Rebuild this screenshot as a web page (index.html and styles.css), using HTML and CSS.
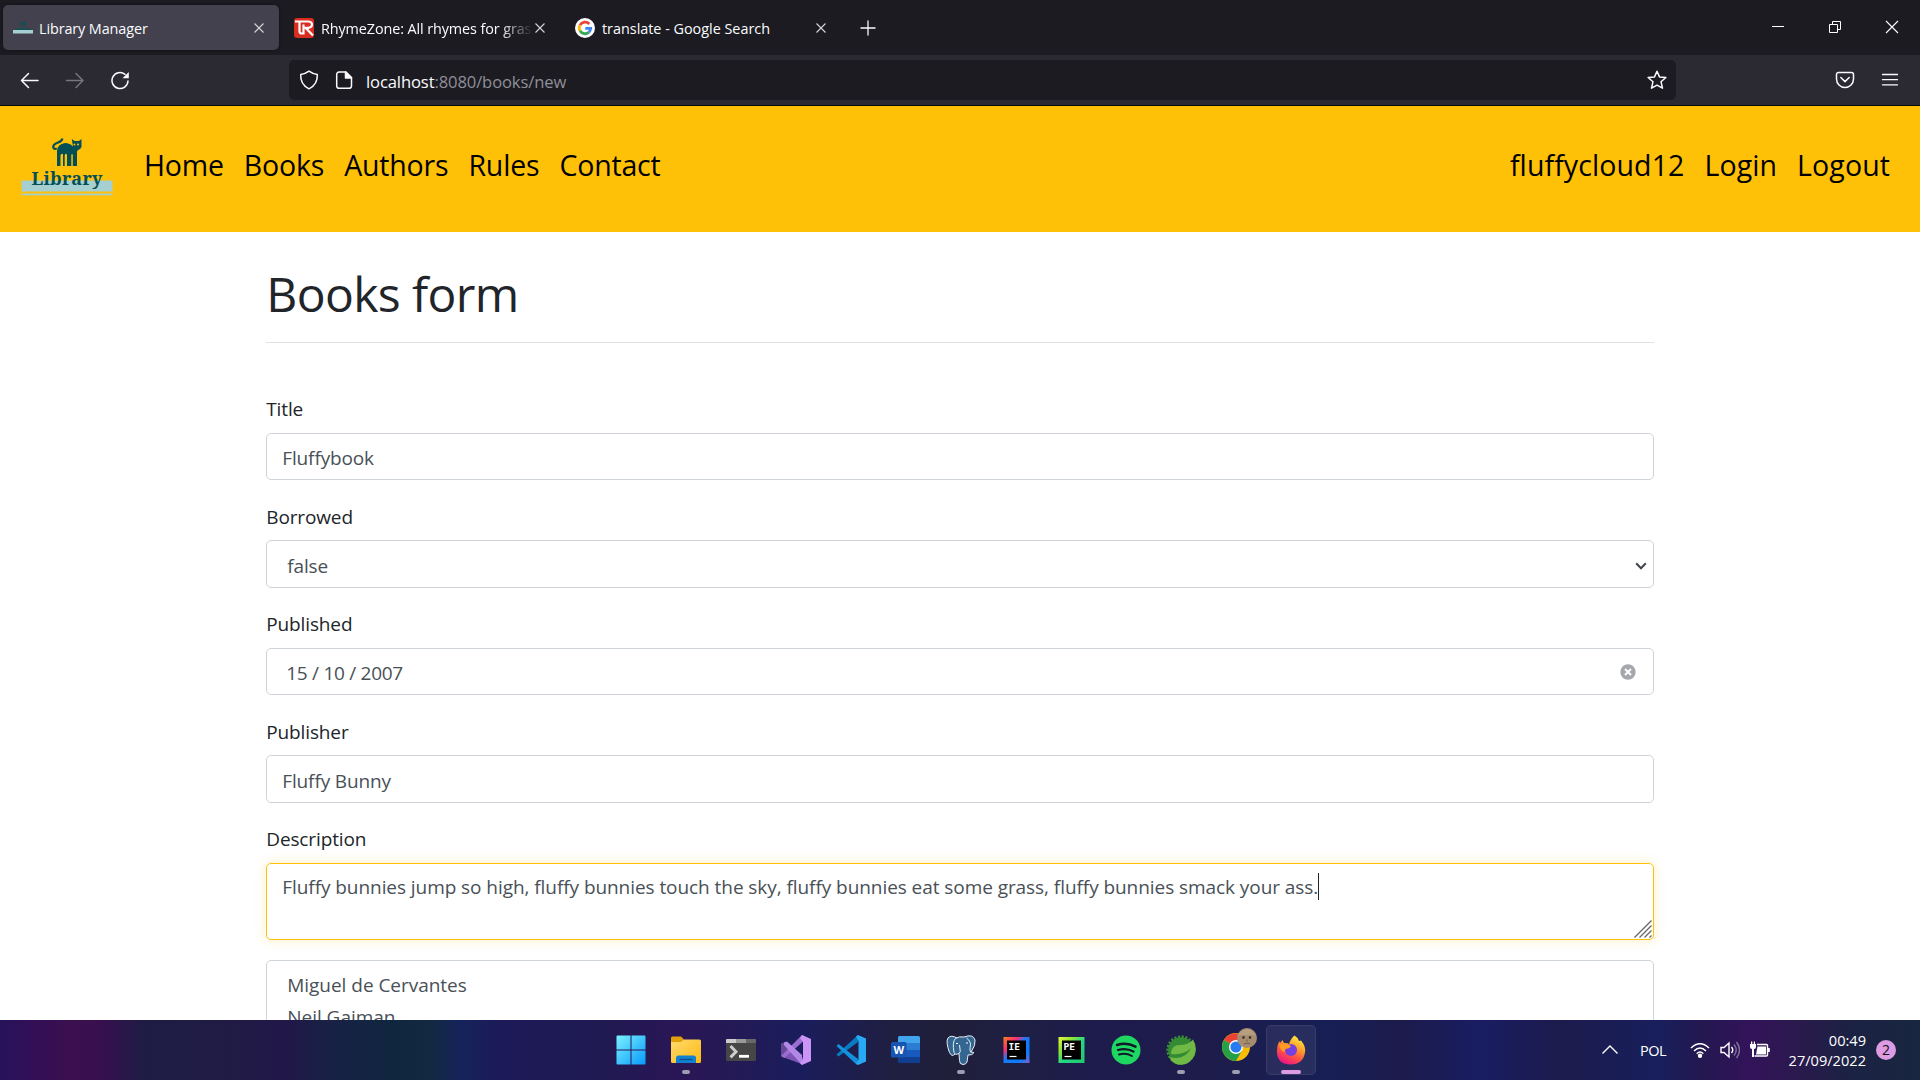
FILE: index.html
```html
<!DOCTYPE html>
<html lang="en">
<head>
<meta charset="utf-8">
<title>Library Manager</title>
<link rel="stylesheet" href="styles.css">
</head>
<body>
<div class="screen">
  <header class="tabbar">
    <div class="tabs">
      <div class="tab active">
        <svg class="favicon" viewBox="0 0 20 20"><rect y="12" width="20" height="3.500" fill="#a5cfd0"/><path d="M7.500 3.500h1v1h3v-1h1v5h-1v-2.500h-1v2.500h-1v-2.500h-1v2.500h-1z" fill="#0b5257"/><path d="M3 11.200h14" stroke="#0b5257" stroke-width="1.800" stroke-dasharray="1.800 .4"/></svg>
        <span class="tab-title">Library Manager</span>
        <svg class="close" viewBox="0 0 10 10"><path d="M.5.500l9 9M9.500.500l-9 9"/></svg>
      </div>
      <div class="tab">
        <svg class="favicon" viewBox="0 0 20 20"><rect width="20" height="20" rx="3" fill="#d92d20"/><path d="M1 3.500h13.500q3.500.3 3.500 3t-3.500 3.300h-3L19 17.500M5.500 3.500v10q0 2 2.500 2h1.500V6.500" fill="none" stroke="#fff" stroke-width="2.200"/></svg>
        <span class="tab-title fade rhyme">RhymeZone: All rhymes for grass</span>
        <svg class="close" viewBox="0 0 10 10"><path d="M.5.500l9 9M9.500.500l-9 9"/></svg>
      </div>
      <div class="tab">
        <svg class="favicon" viewBox="0 0 20 20"><circle cx="10" cy="10" r="10" fill="#fff"/><g fill="none" stroke-width="2.800"><path d="M14.300 6A5.800 5.800 0 0 0 5 7.200" stroke="#ea4335"/><path d="M5 7.200a5.800 5.800 0 0 0 0 5.600" stroke="#fbbc05"/><path d="M5 12.800a5.800 5.800 0 0 0 8.700 1.600" stroke="#34a853"/><path d="M13.700 14.400a5.800 5.800 0 0 0 2-4H10.300" stroke="#4285f4"/></g></svg>
        <span class="tab-title translate">translate - Google Search</span>
        <svg class="close" viewBox="0 0 10 10"><path d="M.5.500l9 9M9.500.500l-9 9"/></svg>
      </div>
      <svg class="newtab" viewBox="0 0 16 16"><path d="M8 .5v15M.5 8h15"/></svg>
    </div>
    <div class="winctl">
      <svg width="14" height="14" viewBox="0 0 14 14"><path d="M1 6.500h12" stroke="#fff"/></svg>
      <svg width="14" height="14" viewBox="0 0 14 14"><path d="M1.500 4.500h8v8h-8zM4.500 4v-2.500h8v8h-3" stroke="#fff"/></svg>
      <svg width="14" height="14" viewBox="0 0 14 14"><path d="M1 1l12 12M13 1l-12 12" stroke="#fff" stroke-width="1.100"/></svg>
    </div>
  </header>

  <div class="toolbar">
    <div class="navbtns">
      <svg viewBox="0 0 20 20"><path d="M18 10.500H1.500M8.500 3.500l-7 7 7 7"/></svg>
      <svg class="off" viewBox="0 0 20 20"><path d="M1.500 10.500H18M11 3.500l7 7-7 7"/></svg>
      <svg viewBox="0 0 20 20"><path d="M18 11a8 8 0 1 1-3-6.700"/><path d="M18.800 2v6.300h-6.300z" fill="#fbfbfe" stroke="none"/></svg>
    </div>
    <div class="urlbar">
      <svg viewBox="0 0 20 20"><path d="M10 1.200q3.800 2.800 8.300 3.300.5 10-8.300 14.300Q1.200 14.500 1.700 4.500 6.200 4 10 1.200z"/></svg>
      <svg class="doc" viewBox="0 0 20 20"><path d="M5 2h7l5.500 5.500V16a2.300 2.300 0 0 1-2.300 2.300H5A2.300 2.300 0 0 1 2.700 16V4.300A2.300 2.300 0 0 1 5 2z"/><path d="M11.500 2v6h6z" fill="#fbfbfe"/></svg>
      <span class="url">localhost<span class="path">:8080/books/new</span></span>
      <svg class="star" viewBox="0 0 20 20"><path d="M10 1.200l2.500 5.700 6.400.6-4.900 4.200 1.500 6.500-5.500-3-5.500 3 1.500-6.500-4.900-4.200 6.400-.6z"/></svg>
    </div>
    <div class="menus">
      <svg viewBox="0 0 20 20"><path d="M3.500 2.500h13a2 2 0 0 1 2 2V9a8.500 8.500 0 0 1-17 0V4.500a2 2 0 0 1 2-2z"/><path d="M5.800 7.500L10 11.600l4.200-4.100"/></svg>
      <svg viewBox="0 0 20 20"><path d="M2.500 4.500h15M2.500 9.700h15M2.500 14.800h15" stroke-width="1.300"/></svg>
    </div>
  </div>

  <nav class="sitebar">
    <svg class="logo" viewBox="0 0 92 60">
      <rect x=".5" y="43.500" width="91" height="11" fill="#a5cfd0"/><rect x=".5" y="56.500" width="91" height="1.800" fill="#a5cfd0"/>
      <path d="M41.500 1.500q-1 3.200-5 4.200-5 2-4.200 5 .7 1.800 3.500.8" fill="none" stroke="#034f55" stroke-width="2.200"/>
      <path d="M36 29V14q.5-7 8-8 5 0 8 3.500l-1.200-7.500 2.800 2h4.300l2.600-2v8q-1 2.500-3.500 3l-1 1.500V29h-4.200V18q-.8-1.800-1.500 0v11h-4.300V18q-.9-2.500-2.300 0v11h-1.700V17q-.9-1-2.500 1v11z" fill="#034f55"/>
      <circle cx="53.500" cy="7.500" r="1" fill="#ffc107"/><circle cx="57" cy="7.500" r="1" fill="#ffc107"/>
      <text x="10.500" y="47.500" textLength="71" class="logo-text">Library</text>
    </svg>
    <div class="links">
      <a>Home</a><a>Books</a><a>Authors</a><a>Rules</a><a>Contact</a>
    </div>
    <div class="links user"><a>fluffycloud12</a><a>Login</a><a>Logout</a></div>
  </nav>

  <main class="container">
    <h1>Books form</h1>
    <hr>
    <div class="group"><label>Title</label><div class="control">Fluffybook</div></div>
    <div class="group"><label>Borrowed</label><div class="control inset">false
      <svg class="arrow" viewBox="0 0 12 8"><path d="M1.200 1.200L6 6.200l4.800-5"/></svg></div></div>
    <div class="group"><label>Published</label><div class="control inset"><span class="date">15 / 10 / 2007</span>
      <svg class="clear" viewBox="0 0 16 16"><circle cx="8" cy="8" r="7.700" fill="#a4a7ab"/><path d="M5 5l6 6M11 5l-6 6" stroke="#fff" stroke-width="2"/></svg></div></div>
    <div class="group"><label>Publisher</label><div class="control">Fluffy Bunny</div></div>
    <div class="group last"><label>Description</label><div class="control area"><span class="desc">Fluffy bunnies jump so high, fluffy bunnies touch the sky, fluffy bunnies eat some grass, fluffy bunnies smack your ass.</span><i class="caret"></i>
      <svg class="grip" viewBox="0 0 18 18"><path d="M.5 17.500l17-17M5.500 17.500l12-12M10.500 17.500l7-7M15.500 17.500l2-2"/></svg></div></div>
    <div class="list"><div>Miguel de Cervantes</div><div>Neil Gaiman</div></div>
  </main>

  <footer class="taskbar">
    <div class="apps">
      <div class="app"><svg viewBox="0 0 30 30"><defs><linearGradient id="win" x1="0" y1="0" x2="30" y2="30" gradientUnits="userSpaceOnUse"><stop stop-color="#7df3ff"/><stop offset="1" stop-color="#0698fb"/></linearGradient></defs><path d="M.5 1.500a1 1 0 0 1 1-1h13v14H.5zM15.500.500h13a1 1 0 0 1 1 1v13h-14zM.5 15.500h14v14h-13a1 1 0 0 1-1-1zM15.500 15.500h14v13a1 1 0 0 1-1 1h-13z" fill="url(#win)"/></svg></div>
      <div class="app run"><svg viewBox="0 0 30 30"><defs><linearGradient id="fold" x1="0" y1="0" x2="1" y2="1"><stop stop-color="#ffdb6e"/><stop offset="1" stop-color="#fdb912"/></linearGradient></defs><path d="M0 3q0-1.500 1.500-1.500H10l3 3V10H0z" fill="#e3a008"/><path d="M0 7h10l3-2.500h15.500Q30 4.500 30 6v20.500q0 1.500-1.500 1.500h-27Q0 28 0 26.500z" fill="url(#fold)"/><path d="M5 28v-5q0-2.500 2.500-2.500h15q2.500 0 2.500 2.500v5z" fill="#1180cf"/><path d="M8.500 24.500h13" stroke="#075193" stroke-width="1.200"/></svg></div>
      <div class="app"><svg viewBox="0 0 30 30"><rect y="4" width="30" height="22" rx="1.500" fill="#464646"/><path d="M0 8V5q0-1 1-1h9v4z" fill="#ccc"/><path d="M10 4h10v4H10z" fill="#999"/><path d="M20 4h9q1 0 1 1v3H20z" fill="#686868"/><path d="M4.500 11l5.500 5.700-5.500 5.700" fill="none" stroke="#ccc" stroke-width="3"/><path d="M13 21.300h10" stroke="#fff" stroke-width="2.800"/></svg></div>
      <div class="app"><svg viewBox="0 0 30 30"><path d="M0 9l4-2 18 16v6.500L1.500 22 0 20.500z" fill="#7d56b5"/><path d="M0 9l4-2 7 8-7 8-4-2z" fill="#6a4899"/><path d="M3.500 23L0 21l21-21 5 3z" fill="#9a6bd0"/><path d="M3 7.500l3-1L21 20v10L3 10z" fill="#b287e6"/><path d="M21 0l9 4v22l-9 4-2-2 3-4V7l-3-4z" fill="#cb95f5"/></svg></div>
      <div class="app"><svg viewBox="0 0 30 30"><path d="M.5 19.500L22 0v7L2.500 21.500z" fill="#087bc2"/><path d="M.5 11l2-2L22 24l-1 6z" fill="#1490dc"/><path d="M22 0l8 3.500v23L22 30l-2-1.500 2.500-4V6L20 1.500z" fill="#29a9f3"/></svg></div>
      <div class="app"><svg viewBox="0 0 30 30"><path d="M7 2.500Q7 1 8.500 1h19Q29 1 29 2.500V8H7z" fill="#41a5ee"/><path d="M7 8h22v7H7z" fill="#2b7cd3"/><path d="M7 15h22v7H7z" fill="#185abd"/><path d="M7 22h22v4.500q0 1.500-1.500 1.500h-19Q7 28 7 26.500z" fill="#103f91"/><rect y="7" width="15.500" height="15.500" rx="1.500" fill="#1855b2"/><text x="7.700" y="18.700" text-anchor="middle" class="word">W</text></svg></div>
      <div class="app run"><svg viewBox="0 0 30 30"><g fill="#336791" stroke="#e8eef5" stroke-width="1"><path d="M11 3Q5-.5 2 3q-2.500 4 1.500 14.500 2.500 5 5.500 1.500l2-2.500z"/><path d="M18 2q9-3.500 11 3 1 5-4 12l3 .5q-1.500 3-6 2.500l-1 7q-1 2.500-4 2.500-3.500 0-3.500-4l-.5-7q-4 2-5-1-2-11 1.500-14 3.500-2.500 8.500-1.500z"/><path d="M20.500 3q5.500 4 3.500 9.500-.5 3 1 5M13 18.500q2-1.500 1-4.500l-.5-4" fill="none"/></g><path d="M10 8.500h2M20 8h2" stroke="#fff"/></svg></div>
      <div class="app"><svg viewBox="0 0 30 30"><defs><linearGradient id="ie" x1="0" y1="0" x2="1" y2="1"><stop stop-color="#fc801d"/><stop offset=".28" stop-color="#fe2d72"/><stop offset=".45" stop-color="#1c78fa"/><stop offset=".75" stop-color="#087cfa"/><stop offset="1" stop-color="#8060cb"/></linearGradient></defs><rect x="2.500" y="2" width="26" height="26" fill="url(#ie)"/><rect x="6" y="5.500" width="19" height="19"/><text x="7.500" y="15" class="jb">IE</text><path d="M8.500 21.500h7" stroke="#fff" stroke-width="1.200"/></svg></div>
      <div class="app"><svg viewBox="0 0 30 30"><defs><linearGradient id="pe" x1="0" y1="0" x2="1" y2="1"><stop stop-color="#e8f348"/><stop offset=".25" stop-color="#9be82f"/><stop offset=".55" stop-color="#21d789"/><stop offset="1" stop-color="#21c66b"/></linearGradient></defs><rect x="2.500" y="2" width="26" height="26" fill="url(#pe)"/><rect x="6" y="5.500" width="19" height="19"/><text x="7.500" y="15" class="jb">PE</text><path d="M8.500 21.500h7" stroke="#fff" stroke-width="1.200"/></svg></div>
      <div class="app"><svg viewBox="0 0 30 30"><circle cx="15" cy="15" r="14.500" fill="#1ed760"/><g fill="none" stroke="#111827" stroke-linecap="round"><path d="M6 10q10-3 18.500 1.700" stroke-width="2.500"/><path d="M7 15q8-2.500 15.500 1.500" stroke-width="2.200"/><path d="M8 19.500q7-2 13 1.500" stroke-width="1.900"/></g></svg></div>
      <div class="app run"><svg viewBox="0 0 30 30"><circle cx="15" cy="15" r="13.300" fill="none" stroke="#388e35" stroke-width="2.700" stroke-dasharray="2.200 1.500"/><circle cx="15" cy="15" r="12.800" fill="#358a34"/><path d="M27 4.500q5 8 1 17-7 11-18 7.500-5-2-6.500-7Q19 26 25 13q-6 7-20 6 0-9 9-9 8 0 13-5.500z" fill="#70b944"/></svg></div>
      <div class="app run"><svg viewBox="0 0 36 36" class="chrome"><circle cx="15" cy="19" r="14" fill="#fbbc05"/><path d="M15 19L2.900 12A14 14 0 0 1 27 12z" fill="#ea4335"/><path d="M2.900 12A14 14 0 0 0 15 33l6-10.500-6-3.500z" fill="#25a048"/><path d="M15 12h12.500v1H15z" fill="#ea4335"/><circle cx="15" cy="19" r="7" fill="#fff"/><circle cx="15" cy="19" r="5.600" fill="#267bf0"/><circle cx="26" cy="10" r="10" fill="#a78d70"/><path d="M17 8q4-7 9-7t9 7q-4-2-9-1-5-1-9 1z" fill="#b89f80"/><circle cx="22.500" cy="9.500" r="1.200" fill="#322820"/><circle cx="29" cy="9.500" r="1.200" fill="#322820"/><path d="M23 16q3-2 6 0M26 11.500v2" fill="none" stroke="#735a48"/></svg></div>
      <div class="app focus"><svg viewBox="0 0 30 30"><defs><linearGradient id="ff" x1=".8" y1="0" x2=".3" y2="1"><stop stop-color="#fff44f"/><stop offset=".35" stop-color="#ffa72b"/><stop offset=".65" stop-color="#ff5540"/><stop offset="1" stop-color="#e8128a"/></linearGradient></defs><path d="M18.500.500Q22 2.500 23 6l2-.5q5 6 4 12-2 12-14.500 12T1 18Q.5 11 3.500 6l.5 2 2.500-3 1.500 3q3-.5 5 1 2-6 5.500-8.500z" fill="url(#ff)"/><circle cx="15" cy="15" r="6" fill="#7540df"/><path d="M3 10q7-3 12 1-1 2.500-5 2.700-2 1-1 3.300-4 0-6-7z" fill="#ff9c22"/></svg></div>
    </div>
    <div class="tray">
      <svg class="chev" viewBox="0 0 16 10"><path d="M.5 8.500L8 1l7.500 7.500"/></svg>
      <span class="lang">POL</span>
      <svg class="sys" viewBox="0 0 20 20"><path d="M1 8q9-8.500 18 0M4 11q6-6 12 0M6.700 13.700q3.300-3.200 6.600 0"/><circle cx="10" cy="15.800" r="1.500" fill="#fff"/></svg>
      <svg class="sys" viewBox="0 0 20 20"><path d="M1 7.500h3l5-4.500v14l-5-4.500H1z"/><path d="M11.500 7q2.500 3 0 6"/><path d="M14 4.500q4.500 5.500 0 11M16.500 2q6 8 0 16" opacity=".4"/></svg>
      <svg class="sys" viewBox="0 0 20 20"><path d="M7 4.500h9.500a1 1 0 0 1 1 1v9.500a1 1 0 0 1-1 1h-12"/><path d="M7.500 6.500h8.500v8h-10zM18 8h1.800v4H18zM0 4h6v3q0 2-2 2v8H2V9Q0 9 0 7zM1 1.500h1.300V4H1zM3.800 1.500H5V4H3.800z" fill="#fff" stroke="none"/></svg>
      <div class="clock"><span>00:49</span><span>27/09/2022</span></div>
      <span class="badge">2</span>
    </div>
  </footer>
</div>
</body>
</html>
```
FILE: styles.css
```css
* { box-sizing: border-box; }
body { margin: 0; font-family: "Open Sans", "Noto Sans", sans-serif; background: #fff; }
svg { display: block; flex: none; }
.screen { width: 1920px; height: 1080px; display: flex; flex-direction: column; overflow: hidden; }

.tabbar { height: 55px; flex: none; background: #1c1b22; display: flex; justify-content: space-between; padding: 5px 0 0 3px; }
.tabs { display: flex; gap: 5px; height: 45px; align-items: center; }
.tab { width: 276px; height: 45px; padding: 0 15px 0 10px; display: flex; align-items: center; border-radius: 5px; color: #fbfbfe; }
.tab.active { background: #42414d; box-shadow: 0 0 3px #0008; }
.favicon { width: 20px; height: 20px; margin-right: 6px; }
.tab-title { flex: 1; font-size: 14.400px; white-space: nowrap; overflow: hidden; line-height: 24px; padding-top: 2px; letter-spacing: -.1px; }
.tab-title.rhyme { padding-left: 1px; }
.tab-title.translate { padding-left: 1px; letter-spacing: -.01px; }
.fade { -webkit-mask-image: linear-gradient(90deg, #000 180px, transparent 213px); mask-image: linear-gradient(90deg, #000 180px, transparent 213px); }
.close { width: 10px; height: 10px; stroke: #d5d5dc; stroke-width: 1.100; }
.newtab { width: 16px; height: 16px; margin-left: 14px; stroke: #fbfbfe; stroke-width: 1.300; }
.winctl { display: flex; gap: 43px; padding: 15px 21px 0 0; }
.winctl svg { fill: none; }

.toolbar { height: 51px; flex: none; background: #2b2a33; border-bottom: 1px solid #0c0c0d; display: flex; align-items: center; padding: 0 20px; }
.navbtns { display: flex; gap: 25px; width: 269px; }
.toolbar svg { width: 20px; height: 20px; fill: none; stroke: #fbfbfe; stroke-width: 1.500; stroke-linejoin: round; stroke-linecap: round; }
.toolbar .off { stroke: #76757d; }
.urlbar { width: 1387px; height: 40px; border-radius: 5px; background: #1c1b22; display: flex; align-items: center; padding: 0 9px 0 10px; }
.urlbar .doc { margin-left: 15px; }
.url { flex: 1; margin-left: 12px; font-size: 16.600px; color: #fbfbfe; line-height: 24px; padding-top: 4px; letter-spacing: -.12px; }
.path { color: #8f8f98; }
.menus { display: flex; gap: 25px; margin-left: 159px; }

.sitebar { height: 126px; flex: none; background: #ffc107; display: flex; align-items: flex-start; padding: 31px 30px 0 21px; }
.logo { width: 92px; height: 60px; }
.logo-text { font: bold 18px "Noto Serif", "DejaVu Serif", serif; fill: #034f55; }
.links { display: flex; gap: 20px; margin: 5px 0 0 31px; font-size: 28.500px; line-height: 46px; color: #000; letter-spacing: -.18px; }
.links.user { margin-left: auto; letter-spacing: .1px; }

.container { width: 1387.500px; margin: 0 auto; flex: 1; min-height: 0; overflow: visible; color: #212529; font-size: 19px; letter-spacing: -.13px; }
h1 { font-size: 48px; font-weight: 400; line-height: 60px; margin: 32px 0 0; letter-spacing: -.6px; }
hr { border: 0; border-top: 1px solid #dfe0e2; margin: 18px 0 50.300px; }
.group { height: 107.500px; }
.group.last { height: 136.700px; }
label { display: block; line-height: 30px; padding-top: 1px; margin-bottom: 8.500px; }
.control { height: 47.500px; border: 1px solid #ced4da; border-radius: 5px; padding: 3px 15px 0; line-height: 46px; color: #495057; display: flex; justify-content: space-between; align-items: center; }
.inset { padding-left: 20px; }
.date { margin-left: -1px; letter-spacing: -.28px; }
.arrow { width: 12px; height: 8px; margin-right: -9px; fill: none; stroke: #40464c; stroke-width: 2; }
.clear { width: 16px; height: 16px; margin: -2px 2px 0 0; }
.area { position: relative; height: 77px; border-color: #ffc107; box-shadow: 0 0 12px #ffc10740; justify-content: flex-start; align-items: flex-start; padding-top: 9px; line-height: 29px; white-space: nowrap; }
.desc { letter-spacing: -.063px; }
.caret { width: 1px; height: 27px; background: #212529; }
.grip { position: absolute; right: 1px; bottom: 1px; width: 18px; height: 18px; stroke: #666; stroke-width: 1.300; }
.list { height: 140px; border: 1px solid #ced4da; border-radius: 5px; padding: 9.500px 20px; color: #495057; line-height: 31.500px; letter-spacing: -.03px; }

.taskbar { position: relative; z-index: 1; height: 60px; flex: none; display: flex; justify-content: space-between; padding: 5px 24px 5px 606px; background: linear-gradient(90deg, #26135a 0, #330f56 34px, #3c104e 75px, #380f50 100px, #1e1c44 145px, #201b45 230px, #211748 285px, #182145 330px, #10263f 390px, #122940 430px, #15235a 460px, #1c1a58 500px, #201a52 600px, #2a1656 680px, #241a55 730px, #1a1d5c 800px, #1f1f42 890px, #201f3a 950px, #1e1f45 1030px, #1e1b4d 1100px, #1d1c4a 1200px, #171f55 1330px, #1c1b4b 1400px, #191d62 1480px, #1c1b4d 1560px, #181f5c 1660px, #231850 1700px, #33135a 1750px, #2a1a4d 1800px, #1b2243 1850px, #182640 1920px); }
.apps { display: flex; gap: 5px; }
.app { width: 50px; height: 50px; display: flex; align-items: center; justify-content: center; position: relative; border-radius: 5px; }
.app svg { width: 30px; height: 30px; }
.app .chrome { width: 36px; height: 36px; margin: -8px 0 0 6px; }
.app.focus { background: #ffffff12; box-shadow: inset 0 0 0 1px #ffffff12; }
.run::after, .focus::after { content: ""; position: absolute; bottom: 1px; width: 8px; height: 4px; border-radius: 2px; background: #9d9cb0; }
.focus::after { width: 20px; background: #dd9be3; }
.word { font: bold 11px "Open Sans", sans-serif; fill: #fff; }
.jb { font: bold 9.500px "DejaVu Sans Mono", monospace; fill: #fff; }
.tray { display: flex; align-items: center; color: #fff; }
.tray svg { fill: none; stroke: #fff; stroke-width: 1.400; }
.chev { width: 16px; height: 10px; margin-right: 22px; }
.lang { width: 27px; margin-right: 23px; font-size: 14.500px; letter-spacing: -.5px; }
.sys { width: 20px; height: 20px; margin-right: 10px; }
.clock { width: 86px; display: flex; flex-direction: column; align-items: flex-end; margin-right: 10px; font-size: 14.600px; line-height: 20px; letter-spacing: 0; }
.badge { width: 20px; height: 20px; border-radius: 50%; background: #dd9be3; color: #111; font-size: 14px; line-height: 20px; text-align: center; }
```
